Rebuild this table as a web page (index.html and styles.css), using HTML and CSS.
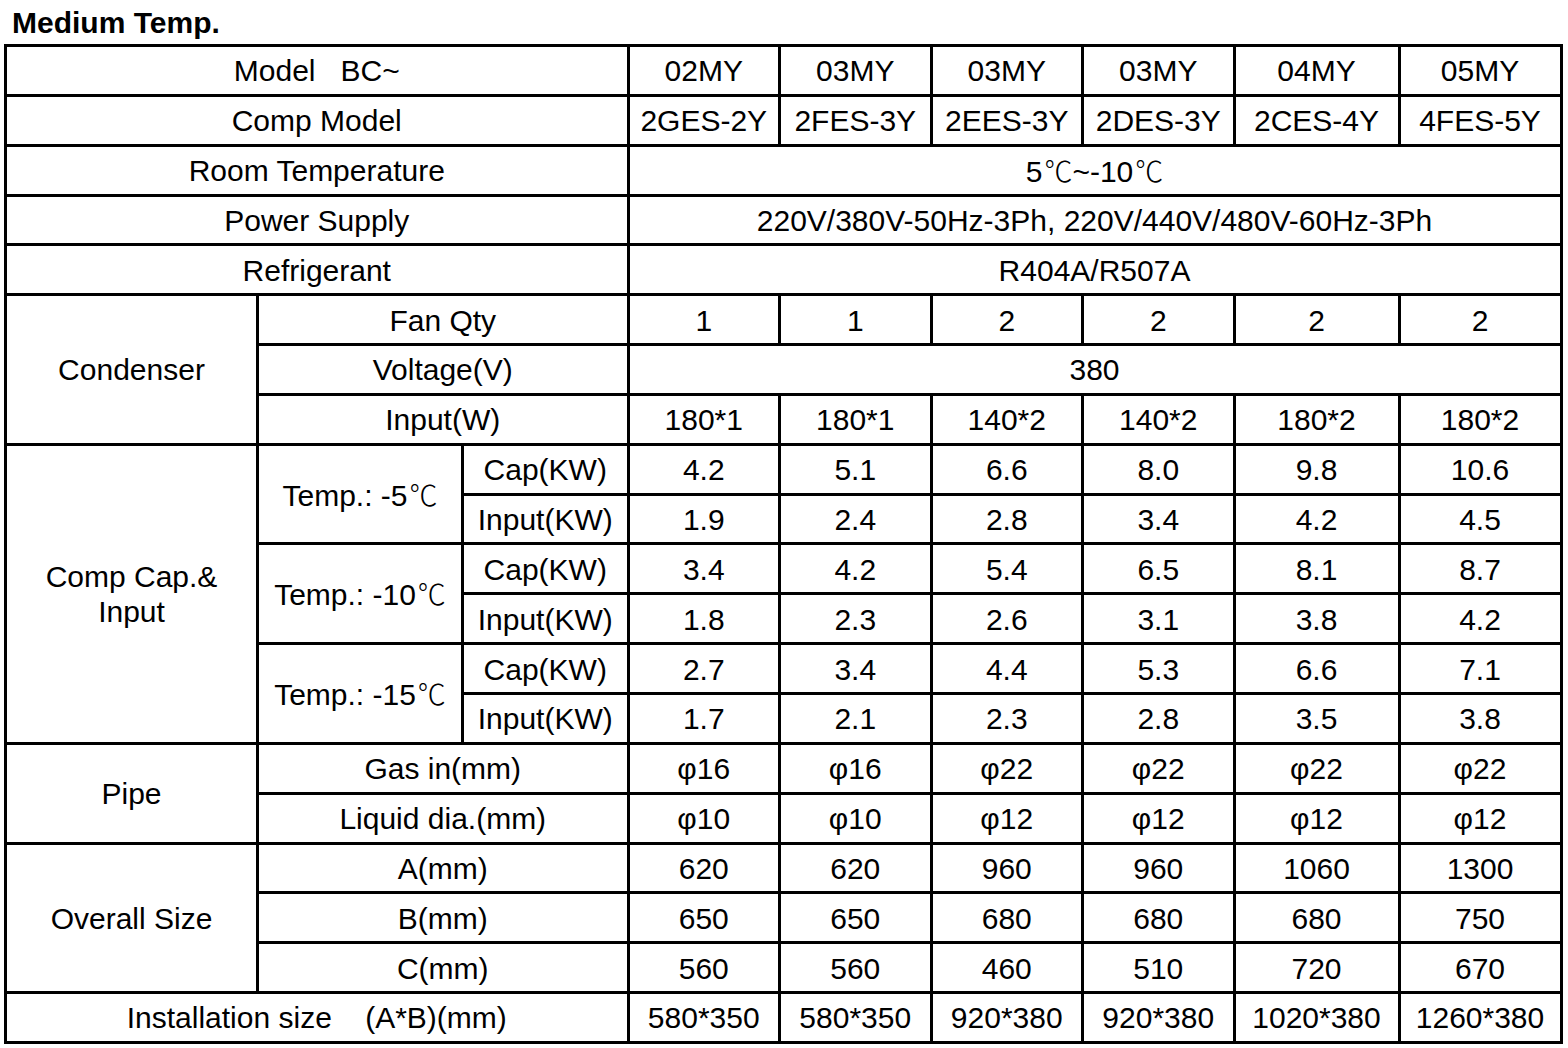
FILE: index.html
```html
<!DOCTYPE html>
<html lang="en">
<head>
  <meta charset="UTF-8" />
  <meta name="viewport" content="width=device-width, initial-scale=1.0" />
  <title>Medium Temp.</title>
  <link rel="stylesheet" href="styles.css">
</head>
<body>
  <h1 class="title">Medium Temp.</h1>

  <table class="spec-table">
    <colgroup>
      <col class="c-group" />
      <col class="c-item" />
      <col class="c-sub" />
      <col class="c-narrow" />
      <col class="c-narrow" />
      <col class="c-narrow" />
      <col class="c-narrow" />
      <col class="c-wide" />
      <col class="c-last" />
    </colgroup>
    <tr>
      <td colspan="3">Model&nbsp;&nbsp;&nbsp;BC~</td>
      <td>02MY</td><td>03MY</td><td>03MY</td><td>03MY</td><td>04MY</td><td>05MY</td>
    </tr>
    <tr>
      <td colspan="3">Comp Model</td>
      <td>2GES-2Y</td><td>2FES-3Y</td><td>2EES-3Y</td><td>2DES-3Y</td><td>2CES-4Y</td><td>4FES-5Y</td>
    </tr>
    <tr>
      <td colspan="3">Room Temperature</td>
      <td colspan="6">5<span class="deg">℃</span>~-10<span class="deg">℃</span></td>
    </tr>
    <tr>
      <td colspan="3">Power Supply</td>
      <td colspan="6">220V/380V-50Hz-3Ph, 220V/440V/480V-60Hz-3Ph</td>
    </tr>
    <tr>
      <td colspan="3">Refrigerant</td>
      <td colspan="6">R404A/R507A</td>
    </tr>

    <!-- condenser -->
    <tr>
      <td rowspan="3">Condenser</td>
      <td colspan="2">Fan Qty</td>
      <td>1</td><td>1</td><td>2</td><td>2</td><td>2</td><td>2</td>
    </tr>
    <tr>
      <td colspan="2">Voltage(V)</td>
      <td colspan="6">380</td>
    </tr>
    <tr>
      <td colspan="2">Input(W)</td>
      <td>180*1</td><td>180*1</td><td>140*2</td><td>140*2</td><td>180*2</td><td>180*2</td>
    </tr>

    <!-- compressor capacity -->
    <tr>
      <td rowspan="6">Comp Cap.&amp;<br>Input</td>
      <td rowspan="2">Temp.: -5<span class="deg">℃</span></td>
      <td>Cap(KW)</td>
      <td>4.2</td><td>5.1</td><td>6.6</td><td>8.0</td><td>9.8</td><td>10.6</td>
    </tr>
    <tr>
      <td>Input(KW)</td>
      <td>1.9</td><td>2.4</td><td>2.8</td><td>3.4</td><td>4.2</td><td>4.5</td>
    </tr>
    <tr>
      <td rowspan="2">Temp.: -10<span class="deg">℃</span></td>
      <td>Cap(KW)</td>
      <td>3.4</td><td>4.2</td><td>5.4</td><td>6.5</td><td>8.1</td><td>8.7</td>
    </tr>
    <tr>
      <td>Input(KW)</td>
      <td>1.8</td><td>2.3</td><td>2.6</td><td>3.1</td><td>3.8</td><td>4.2</td>
    </tr>
    <tr>
      <td rowspan="2">Temp.: -15<span class="deg">℃</span></td>
      <td>Cap(KW)</td>
      <td>2.7</td><td>3.4</td><td>4.4</td><td>5.3</td><td>6.6</td><td>7.1</td>
    </tr>
    <tr>
      <td>Input(KW)</td>
      <td>1.7</td><td>2.1</td><td>2.3</td><td>2.8</td><td>3.5</td><td>3.8</td>
    </tr>

    <!-- pipe -->
    <tr>
      <td rowspan="2">Pipe</td>
      <td colspan="2">Gas in(mm)</td>
      <td>φ16</td><td>φ16</td><td>φ22</td><td>φ22</td><td>φ22</td><td>φ22</td>
    </tr>
    <tr>
      <td colspan="2">Liquid dia.(mm)</td>
      <td>φ10</td><td>φ10</td><td>φ12</td><td>φ12</td><td>φ12</td><td>φ12</td>
    </tr>

    <!-- overall size -->
    <tr>
      <td rowspan="3">Overall Size</td>
      <td colspan="2">A(mm)</td>
      <td>620</td><td>620</td><td>960</td><td>960</td><td>1060</td><td>1300</td>
    </tr>
    <tr>
      <td colspan="2">B(mm)</td>
      <td>650</td><td>650</td><td>680</td><td>680</td><td>680</td><td>750</td>
    </tr>
    <tr>
      <td colspan="2">C(mm)</td>
      <td>560</td><td>560</td><td>460</td><td>510</td><td>720</td><td>670</td>
    </tr>
    <tr>
      <td colspan="3">Installation size&nbsp;&nbsp;&nbsp;&nbsp;(A*B)(mm)</td>
      <td>580*350</td><td>580*350</td><td>920*380</td><td>920*380</td><td>1020*380</td><td>1260*380</td>
    </tr>
  </table>
</body>
</html>
```

FILE: styles.css
```css
body {
  background-color: #fff;
  color: #000;
  font-family: "Liberation Sans", Arial, "Noto Sans CJK SC", sans-serif;
  margin: 0;
  padding: 0 4px;
}

.title {
  font-size: 30px;
  font-weight: bold;
  line-height: 30px;
  margin: 0 0 6px 8px;
  padding-top: 8px;
}

.spec-table {
  border-collapse: collapse;
  table-layout: fixed;
  border: 3px solid #000;
}

.c-group { width: 252px; }
.c-item { width: 205px; }
.c-sub { width: 165.5px; }
.c-narrow { width: 151.5px; }
.c-wide { width: 165px; }
.c-last { width: 162px; }

.spec-table tr {
  height: 49.85px;
}

.spec-table td {
  border: 3px solid #000;
  padding: 1px 1px 0;
  font-size: 30px;
  line-height: 35px;
  text-align: center;
  vertical-align: middle;
  white-space: nowrap;
}

.deg {
  font-family: "Noto Sans CJK SC", sans-serif;
  font-weight: 300;
  font-size: 28px;
  margin-left: 2px;
}
```
